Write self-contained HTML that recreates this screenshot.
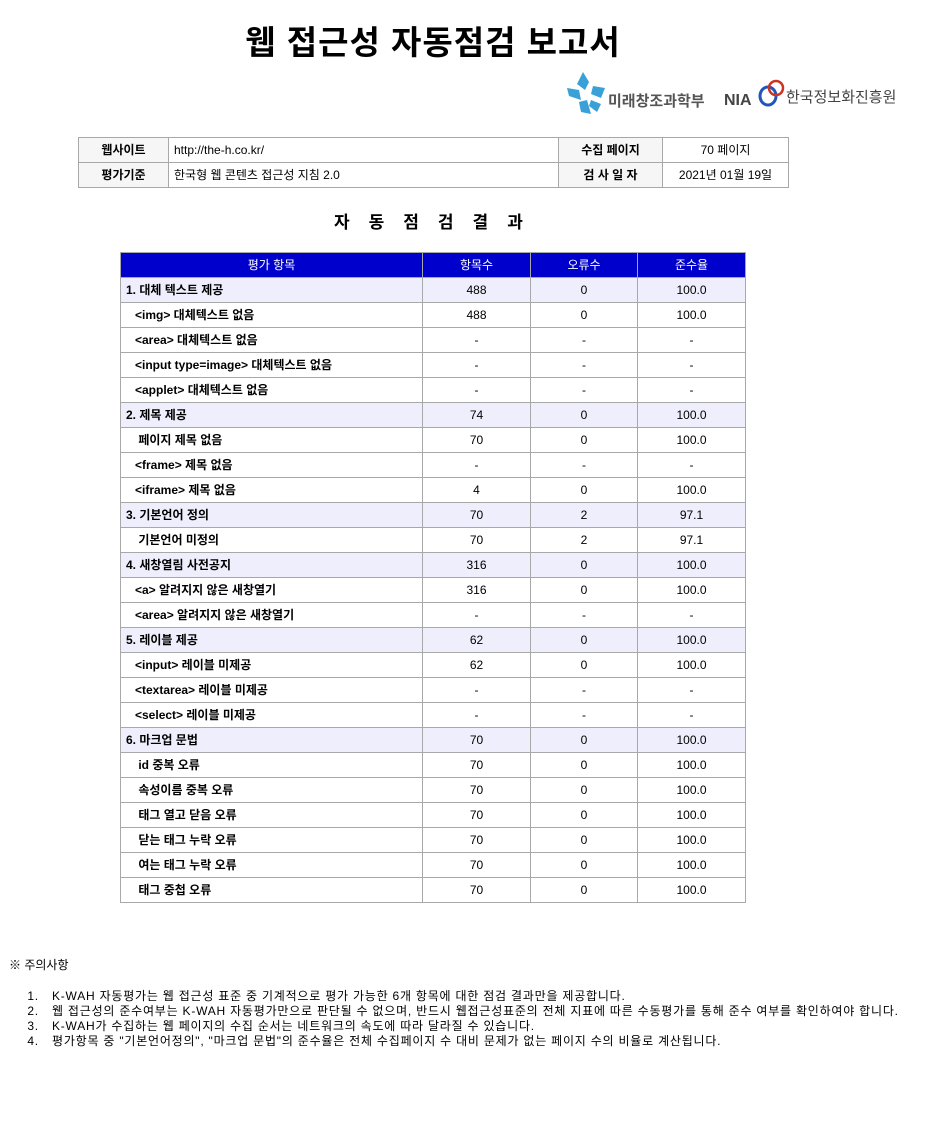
<!DOCTYPE html>
<html><head><meta charset="utf-8"><style>
body{margin:0;width:930px;height:1136px;background:#fff;font-family:"Liberation Sans","Noto Sans CJK KR",sans-serif;font-size:12px;color:#000;position:relative}
.a{position:absolute}
table{border-collapse:collapse;table-layout:fixed;position:absolute}
td{border:1px solid #a8a8a8;height:24px;padding:0;text-align:center;font-size:12px;line-height:14px}
.t1 td.h{font-weight:bold;background:#f6f6f6}
.t1 td.l{text-align:left;padding-left:5px}
.t2 th{background:#0000cc;color:#fff;font-weight:normal;border:1px solid #a8a8a8;height:24px;padding:0;font-size:12px;line-height:14px}
.t2 td.l{text-align:left;padding-left:14px;font-weight:bold}
.t2 tr.c td{background:#eeeefc}
.t2 tr.c td.l{padding-left:5px}
ol{position:absolute;left:11px;top:989px;margin:0;padding-left:32px;font-size:12px;line-height:15px;letter-spacing:0.78px}
ol li{padding-left:9px}
</style></head><body>
<div class="a" style="left:0;width:866px;top:16px;text-align:center;font-size:33px;font-weight:bold;letter-spacing:1px">웹 접근성 자동점검 보고서</div>
<svg class="a" style="left:563px;top:70px" width="44" height="48" viewBox="0 0 44 48"><path d="M20 2l6 10-4 8-8-6z M4 18l12 2 2 10-12-4z M30 16l12 2-4 10-10-4z M16 32l8-2 4 14-10-2z M28 30l10 4-4 8-8-6z" fill="#3aa0d8"/></svg>
<div class="a" style="left:608px;top:90px;font-size:15px;font-weight:bold;color:#555">미래창조과학부</div>
<div class="a" style="left:724px;top:92px;font-size:16px;font-weight:bold;color:#444">NIA</div>
<svg class="a" style="left:756px;top:78px" width="30" height="30" viewBox="0 0 30 30"><ellipse cx="12" cy="18" rx="8" ry="9" fill="none" stroke="#2255bb" stroke-width="3"/><ellipse cx="20" cy="10" rx="7" ry="7" fill="none" stroke="#cc3322" stroke-width="2.5"/></svg>
<div class="a" style="left:786px;top:86px;font-size:15px;color:#444">한국정보화진흥원</div>
<table class="t1" style="left:78px;top:137px;width:710px">
<col style="width:90px"><col style="width:390px"><col style="width:104px"><col style="width:126px">
<tr><td class="h">웹사이트</td><td class="l">http://the-h.co.kr/</td><td class="h">수집 페이지</td><td>70 페이지</td></tr>
<tr><td class="h">평가기준</td><td class="l">한국형 웹 콘텐츠 접근성 지침 2.0</td><td class="h">검 사 일 자</td><td>2021년 01월 19일</td></tr>
</table>
<div class="a" style="left:334px;top:208px;font-size:17px;font-weight:bold;letter-spacing:19px;white-space:nowrap">자동점검결과</div>
<table class="t2" style="left:120px;top:252px;width:625px">
<col style="width:302px"><col style="width:108px"><col style="width:107px"><col style="width:108px">
<tr><th>평가 항목</th><th>항목수</th><th>오류수</th><th>준수율</th></tr>
<tr class="c"><td class="l">1. 대체 텍스트 제공</td><td>488</td><td>0</td><td>100.0</td></tr>
<tr><td class="l">&lt;img&gt; 대체텍스트 없음</td><td>488</td><td>0</td><td>100.0</td></tr>
<tr><td class="l">&lt;area&gt; 대체텍스트 없음</td><td>-</td><td>-</td><td>-</td></tr>
<tr><td class="l">&lt;input type=image&gt; 대체텍스트 없음</td><td>-</td><td>-</td><td>-</td></tr>
<tr><td class="l">&lt;applet&gt; 대체텍스트 없음</td><td>-</td><td>-</td><td>-</td></tr>
<tr class="c"><td class="l">2. 제목 제공</td><td>74</td><td>0</td><td>100.0</td></tr>
<tr><td class="l">&nbsp;페이지 제목 없음</td><td>70</td><td>0</td><td>100.0</td></tr>
<tr><td class="l">&lt;frame&gt; 제목 없음</td><td>-</td><td>-</td><td>-</td></tr>
<tr><td class="l">&lt;iframe&gt; 제목 없음</td><td>4</td><td>0</td><td>100.0</td></tr>
<tr class="c"><td class="l">3. 기본언어 정의</td><td>70</td><td>2</td><td>97.1</td></tr>
<tr><td class="l">&nbsp;기본언어 미정의</td><td>70</td><td>2</td><td>97.1</td></tr>
<tr class="c"><td class="l">4. 새창열림 사전공지</td><td>316</td><td>0</td><td>100.0</td></tr>
<tr><td class="l">&lt;a&gt; 알려지지 않은 새창열기</td><td>316</td><td>0</td><td>100.0</td></tr>
<tr><td class="l">&lt;area&gt; 알려지지 않은 새창열기</td><td>-</td><td>-</td><td>-</td></tr>
<tr class="c"><td class="l">5. 레이블 제공</td><td>62</td><td>0</td><td>100.0</td></tr>
<tr><td class="l">&lt;input&gt; 레이블 미제공</td><td>62</td><td>0</td><td>100.0</td></tr>
<tr><td class="l">&lt;textarea&gt; 레이블 미제공</td><td>-</td><td>-</td><td>-</td></tr>
<tr><td class="l">&lt;select&gt; 레이블 미제공</td><td>-</td><td>-</td><td>-</td></tr>
<tr class="c"><td class="l">6. 마크업 문법</td><td>70</td><td>0</td><td>100.0</td></tr>
<tr><td class="l">&nbsp;id 중복 오류</td><td>70</td><td>0</td><td>100.0</td></tr>
<tr><td class="l">&nbsp;속성이름 중복 오류</td><td>70</td><td>0</td><td>100.0</td></tr>
<tr><td class="l">&nbsp;태그 열고 닫음 오류</td><td>70</td><td>0</td><td>100.0</td></tr>
<tr><td class="l">&nbsp;닫는 태그 누락 오류</td><td>70</td><td>0</td><td>100.0</td></tr>
<tr><td class="l">&nbsp;여는 태그 누락 오류</td><td>70</td><td>0</td><td>100.0</td></tr>
<tr><td class="l">&nbsp;태그 중첩 오류</td><td>70</td><td>0</td><td>100.0</td></tr>
</table>
<div class="a" style="left:9px;top:956px;font-size:12px">※ 주의사항</div>
<ol>
<li>K-WAH 자동평가는 웹 접근성 표준 중 기계적으로 평가 가능한 6개 항목에 대한 점검 결과만을 제공합니다.</li>
<li>웹 접근성의 준수여부는 K-WAH 자동평가만으로 판단될 수 없으며, 반드시 웹접근성표준의 전체 지표에 따른 수동평가를 통해 준수 여부를 확인하여야 합니다.</li>
<li>K-WAH가 수집하는 웹 페이지의 수집 순서는 네트워크의 속도에 따라 달라질 수 있습니다.</li>
<li>평가항목 중 "기본언어정의", "마크업 문법"의 준수율은 전체 수집페이지 수 대비 문제가 없는 페이지 수의 비율로 계산됩니다.</li>
</ol>
</body></html>
